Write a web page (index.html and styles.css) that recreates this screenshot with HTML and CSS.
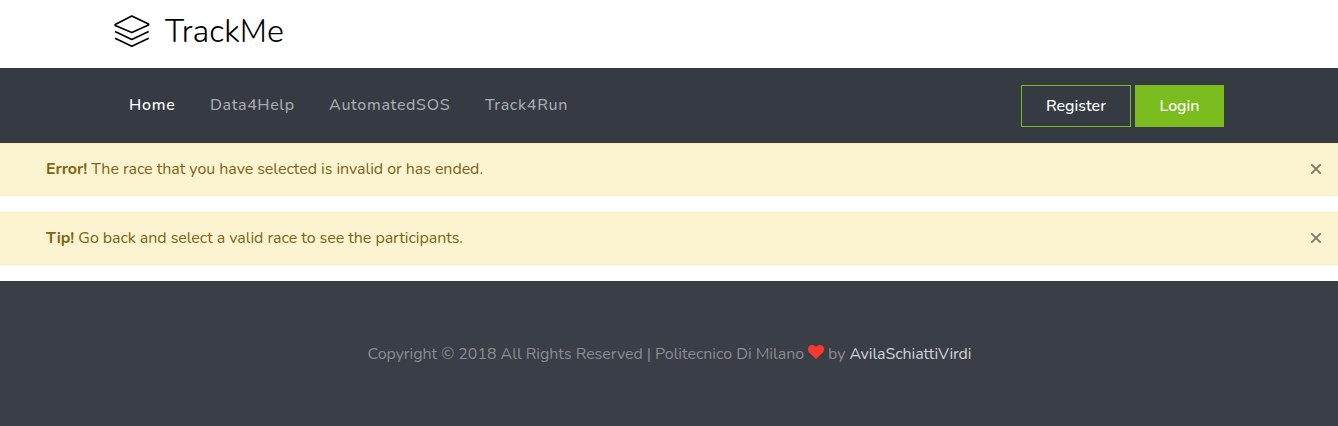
FILE: index.html
```html
<!DOCTYPE html>
<html lang="en">
<head>
<meta charset="utf-8">
<title>TrackMe</title>
<link rel="stylesheet" href="styles.css">
</head>
<body>
<header class="brand-bar">
  <div class="container">
    <a class="brand">
      <svg class="brand-icon" viewBox="0 0 36 34" width="36" height="34">
        <path d="M1.200 10.500 17.800 2 34.500 10 34.500 11 17.800 18.500 1.200 11.500Z"/>
        <path d="M1 17.500 17.800 25.500 34.700 17.500M1 24.300 17.800 32.200 34.700 24.300"/>
      </svg>
      <span class="brand-name">TrackMe</span>
    </a>
  </div>
</header>
<nav class="navbar">
  <div class="container navbar-inner">
    <div class="nav-links">
      <a class="nav-link active">Home</a>
      <a class="nav-link data">Data4Help</a>
      <a class="nav-link sos">AutomatedSOS</a>
      <a class="nav-link run">Track4Run</a>
    </div>
    <div class="nav-actions">
      <a class="btn btn-outline">Register</a>
      <a class="btn btn-solid">Login</a>
    </div>
  </div>
</nav>
<main>
  <div class="alert">
    <p class="alert-text"><strong>Error!</strong> The race that you have selected is invalid or has ended.</p>
    <svg class="close" viewBox="0 0 12 12" width="12" height="12"><path d="M1.3 1.3 10.7 10.7M10.7 1.3 1.3 10.7"/></svg>
  </div>
  <div class="alert">
    <p class="alert-text"><strong>Tip!</strong> Go back and select a valid race to see the participants.</p>
    <svg class="close" viewBox="0 0 12 12" width="12" height="12"><path d="M1.3 1.3 10.7 10.7M10.7 1.3 1.3 10.7"/></svg>
  </div>
</main>
<footer class="footer">
  <span class="copyright">Copyright © 2018 All Rights Reserved | Politecnico Di Milano</span>
  <svg class="heart" viewBox="0 0 16 14" width="16" height="14"><path d="M8 14 1.2 7.6C-.4 5.900-.4 3 .9 1.500 2.700-.5 5.600-.5 7.300 1.200L8 2 8.700 1.200C10.400-.5 13.300-.5 15.100 1.500 16.400 3 16.400 5.900 14.800 7.600Z"/></svg>
  <span class="by">by</span>
  <a class="author">AvilaSchiattiVirdi</a>
</footer>
</body>
</html>
```
FILE: styles.css
```css
* { box-sizing: border-box; }
body {
  margin: 0;
  background: #fff;
  font: 16px/24px Nunito, Lato, "Open Sans", sans-serif;
}
.container { width: 1110px; margin: 0 auto; }
.brand-bar { height: 68px; padding-top: 14px; }
.brand { display: flex; align-items: flex-start; height: 34px; color: #000; }
.brand-icon { fill: none; stroke: #000; stroke-width: 1.7; stroke-linejoin: round; }
.brand-name { margin-left: 15px; font-size: 32px; font-weight: 340; line-height: 36px; letter-spacing: 0.1px; }
.navbar { height: 75px; background: #363a42; }
.navbar-inner { display: flex; justify-content: space-between; padding-top: 17px; }
.nav-links { display: flex; padding: 8px 0 0 15px; }
.nav-link { color: #a6a9ad; font-weight: 500; letter-spacing: 0.65px; white-space: nowrap; width: 156px; }
.nav-link.active { width: 81px; color: #fff; letter-spacing: 0.8px; }
.nav-link.data { width: 119px; letter-spacing: 0.6px; }
.nav-link.run { letter-spacing: 0.7px; }
.nav-actions { display: flex; gap: 4px; }
.btn {
  height: 42px;
  border: 1px solid #7bbd1e;
  color: #fff;
  font-weight: 500;
  line-height: 40px;
  text-align: center;
}
.btn-outline { width: 110px; }
.btn-solid { width: 89px; background: #7bbd1e; }
.alert {
  display: flex;
  justify-content: space-between;
  align-items: flex-start;
  height: 53px;
  margin-bottom: 16px;
  padding: 13px 16px 0 46px;
  border: solid #fbeebc;
  border-width: 1px 0;
  background: #fcf3d0;
  color: #7d6514;
}
.alert-text { margin: 0; letter-spacing: -0.055px; }
.close { margin: 6px 0.5px 0 0; fill: none; stroke: #7e7a69; stroke-width: 1.9; }
.footer {
  display: flex;
  justify-content: center;
  height: 145px;
  padding: 61px 0 0 1px;
  background: #3a3e46;
  color: #898c90;
  letter-spacing: -0.045px;
}
.heart { margin: 3px 4px 0; fill: #f9392e; }
.author { margin-left: 4px; color: #d0d2d5; letter-spacing: -0.08px; }
```
